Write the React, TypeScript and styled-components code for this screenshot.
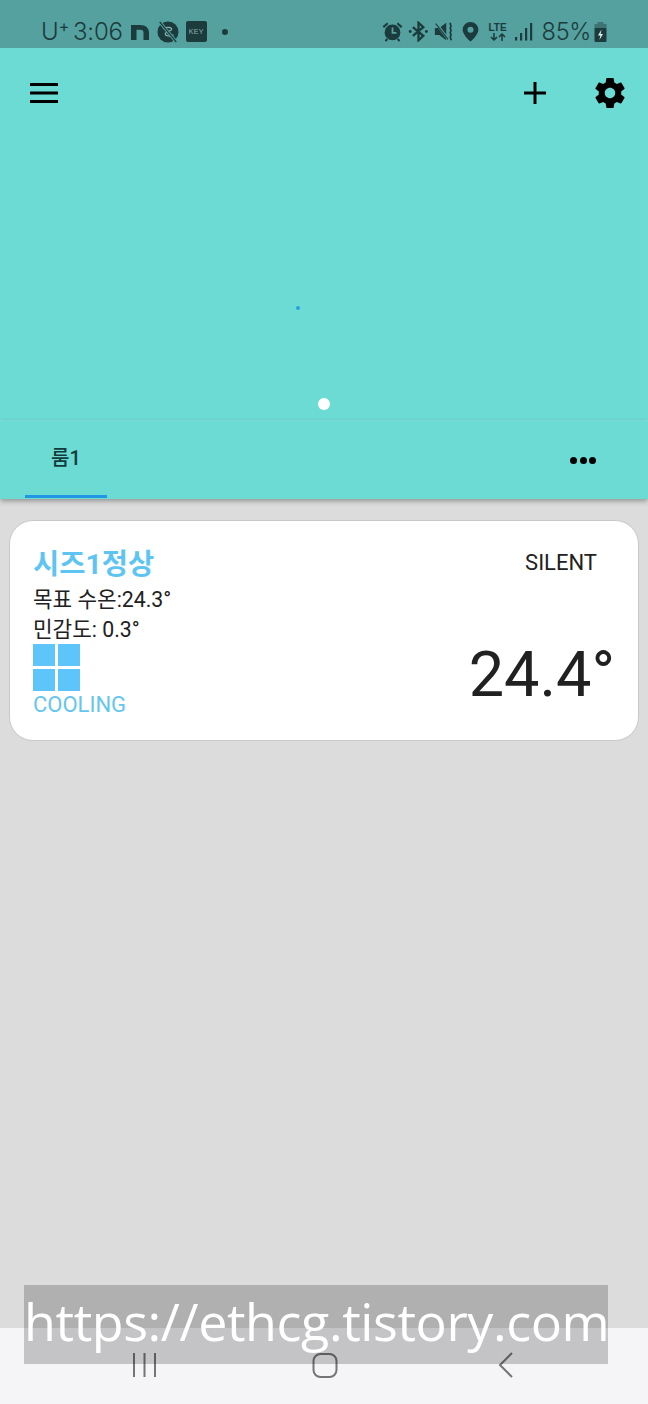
import React from 'react';
import styled, { createGlobalStyle } from 'styled-components';

const GlobalStyle = createGlobalStyle`
html, body {
  margin: 0;
  padding: 0;
  background: #dcdcdc;
}
`;

const StatusIcon: React.FC<{ w: number; children: React.ReactNode }> = ({ w, children }) => (
  <svg width={w} height={w} viewBox="0 0 24 24" fill="#1c3b3c">{children}</svg>
);

const App: React.FC = () => {
  return (
    <Page>
      <GlobalStyle />
      <StatusBar>
        <StatusLeft>
          <Carrier>U<sup>+</sup></Carrier>
          <Clock>3:06</Clock>
          <StatusIcons>
            <NaverN viewBox="0 0 18 16" width="18" height="18">
              <path d="M0 16V1h9.500C14.500 1 18 4 18 8.500V16h-5.500V9c0-2-1-3.200-3-3.200H5.500V16z" fill="#1c3b3c" />
            </NaverN>
            <StatusIcon w={22}>
              <circle cx="12" cy="12" r="11.500" />
              <path d="M7 8.500c3-2.500 9-2 9 .5s-7 2-7 5 6 3 9 1" fill="none" stroke="#8fb3b2" strokeWidth="1.300" />
              <path d="M3 1l18 22" stroke="#55a19f" strokeWidth="3.400" />
              <path d="M3 1l18 22" stroke="#1c3b3c" strokeWidth="1.500" />
            </StatusIcon>
            <KeyBadge>KEY</KeyBadge>
            <Dot />
          </StatusIcons>
        </StatusLeft>
        <StatusRight>
          <StatusIcon w={21}>
            <circle cx="12" cy="13" r="9" />
            <path d="M12 7.500v6h4.500" fill="none" stroke="#55a19f" strokeWidth="2" />
            <path d="M1.500 7l5-4.500M22.500 7l-5-4.500M6 20.500l-2 2.500M18 20.500l2 2.500" stroke="#1c3b3c" strokeWidth="2.400" />
          </StatusIcon>
          <StatusIcon w={21}>
            <path d="M5.500 7l12 10-5.500 5V2l5.500 5-12 10" fill="none" stroke="#1c3b3c" strokeWidth="2.600" />
            <circle cx="2.500" cy="12" r="1.700" />
            <circle cx="21" cy="12" r="1.700" />
          </StatusIcon>
          <StatusIcon w={21}>
            <path d="M1 8h5l8-6v20l-8-6H1z" />
            <path d="M2 2l15 20" stroke="#55a19f" strokeWidth="3" />
            <path d="M2 3l14 18" stroke="#1c3b3c" strokeWidth="1.200" />
            <path d="M19 2c-2 2 2 3 0 5s2 3 0 5 2 3 0 5 2 3 0 5" fill="none" stroke="#1c3b3c" strokeWidth="2" />
          </StatusIcon>
          <StatusIcon w={21}>
            <path d="M12 1a9 9 0 0 0-9 9c0 6 9 13.500 9 13.500S21 16 21 10a9 9 0 0 0-9-9zm0 12.500a3.500 3.500 0 1 1 0-7 3.500 3.500 0 0 1 0 7z" />
          </StatusIcon>
          <LteBlock>
            <LteText>LTE</LteText>
            <svg width="16" height="8" viewBox="0 0 16 8" fill="none" stroke="#1c3b3c" strokeWidth="1.500">
              <path d="M4 0v7M1 4l3 3 3-3M12 8V1M9 4l3-3 3 3" />
            </svg>
          </LteBlock>
          <SignalBars viewBox="0 0 18 18" width="18" height="18" fill="#1c3b3c">
            <rect x="0" y="14" width="2.200" height="3.500" />
            <rect x="5" y="10" width="2.200" height="7.500" />
            <rect x="10" y="5" width="2.200" height="12.500" />
            <rect x="15" y="0" width="2.200" height="17.500" />
          </SignalBars>
          <Battery>85%</Battery>
          <svg width="13" height="20" viewBox="0 0 13 20">
            <rect x="3.500" y="0" width="6" height="3" fill="#3f7474" />
            <rect x="0.500" y="2" width="12" height="5" fill="#3f7474" />
            <rect x="0.500" y="6" width="12" height="14" rx="1" fill="#1c3b3c" />
            <path d="M7.500 7.500L4 13.500h2.400l-1 4.500 3.600-6H6.600z" fill="#dfeeee" />
          </svg>
        </StatusRight>
      </StatusBar>

      <Hero>
        <TopBar>
          <IconButton aria-label="menu">
            <svg width="28" height="20" viewBox="0 0 28 20" fill="#000">
              <rect x="0" y="0" width="28" height="3" />
              <rect x="0" y="8.500" width="28" height="3" />
              <rect x="0" y="17" width="28" height="3" />
            </svg>
          </IconButton>
          <TopActions>
            <IconButton aria-label="add">
              <svg width="24" height="24" viewBox="0 0 24 24" fill="#000">
                <rect x="1" y="10.500" width="22" height="3" />
                <rect x="10.500" y="1" width="3" height="22" />
              </svg>
            </IconButton>
            <IconButton aria-label="settings">
              <svg width="36" height="36" viewBox="0 0 24 24" fill="#000">
                <path d="M19.430 12.980c.04-.32.070-.64.070-.98s-.03-.66-.07-.98l2.110-1.650c.19-.15.240-.42.120-.64l-2-3.460c-.12-.22-.39-.30-.61-.22l-2.490 1c-.52-.40-1.080-.73-1.690-.98l-.38-2.650A.488.488 0 0 0 14 2h-4c-.25 0-.46.180-.49.420l-.38 2.650c-.61.250-1.170.59-1.690.98l-2.490-1c-.23-.09-.49 0-.61.220l-2 3.460c-.13.220-.07.490.12.640l2.110 1.650c-.04.320-.07.650-.07.980s.03.660.07.980l-2.110 1.650c-.19.150-.24.420-.12.640l2 3.460c.12.220.39.300.61.220l2.490-1c.52.400 1.080.730 1.690.980l.38 2.650c.03.240.24.420.49.420h4c.25 0 .46-.180.49-.420l.38-2.650c.61-.250 1.170-.590 1.690-.980l2.490 1c.23.090.49 0 .61-.220l2-3.460c.12-.220.07-.490-.12-.640l-2.110-1.650zM12 15.500c-1.930 0-3.500-1.570-3.500-3.500s1.570-3.500 3.500-3.500 3.500 1.570 3.500 3.500-1.570 3.500-3.500 3.500z" />
              </svg>
            </IconButton>
          </TopActions>
        </TopBar>
        <HeroBody>
          <BlueSpeck />
        </HeroBody>
        <PagerDot />
      </Hero>

      <TabBar>
        <Tab>룸1</Tab>
        <MoreDots>
          <span /><span /><span />
        </MoreDots>
      </TabBar>

      <Content>
        <Card>
          <CardLeft>
            <CardTitle>시즈1정상</CardTitle>
            <CardLine>목표 수온:24.3°</CardLine>
            <CardLine>민감도: 0.3°</CardLine>
            <ModeGrid>
              <span /><span /><span /><span />
            </ModeGrid>
            <ModeLabel>COOLING</ModeLabel>
          </CardLeft>
          <CardRight>
            <FanLabel>SILENT</FanLabel>
            <Temperature>24.4°</Temperature>
          </CardRight>
        </Card>
      </Content>

      <NavBar>
        <svg width="24" height="24" viewBox="0 0 24 24" stroke="#757578" strokeWidth="2">
          <path d="M2 0v24M12.500 0v24M23 0v24" />
        </svg>
        <HomeIcon width="26" height="25" viewBox="0 0 26 25" fill="none" stroke="#757578" strokeWidth="2">
          <rect x="1.500" y="1" width="23" height="23" rx="7" />
        </HomeIcon>
        <svg width="16" height="26" viewBox="0 0 16 26" fill="none" stroke="#757578" strokeWidth="2">
          <path d="M14 1L2 13l12 12" />
        </svg>
      </NavBar>

      <Watermark>https://ethcg.tistory.com</Watermark>
    </Page>
  );
};

const Page = styled.div`
position: relative;
display: flex;
flex-direction: column;
width: 648px;
height: 1404px;
overflow: hidden;
background-color: #dcdcdc;
font-family: Roboto, "Noto Sans CJK KR", sans-serif;
`;

const StatusBar = styled.div`
display: flex;
justify-content: space-between;
align-items: center;
height: 48px;
padding: 15px 41px 0 41px;
box-sizing: border-box;
background-color: #55a19f;
color: #1c3b3c;
`;

const StatusLeft = styled.div`
display: flex;
align-items: center;
`;

const Carrier = styled.span`
width: 32px;
font-family: Inter, Roboto, sans-serif;
font-size: 24px;
font-weight: 300;
line-height: 30px;

sup {
  font-size: 16px;
  line-height: 0;
  font-weight: 400;
  vertical-align: 8px;
}
`;

const Clock = styled.span`
font-family: Inter, Roboto, sans-serif;
font-size: 24px;
font-weight: 300;
line-height: 30px;
letter-spacing: -0.2px;
`;

const StatusIcons = styled.div`
display: flex;
align-items: center;
margin-left: 8px;
gap: 7px;
`;

const NaverN = styled.svg`
display: block;
margin-right: 1px;
`;

const KeyBadge = styled.div`
width: 21px;
height: 21px;
border-radius: 2px;
background-color: #1c3b3c;
color: #8fb3b2;
font-family: "Liberation Sans", sans-serif;
font-size: 7px;
line-height: 21px;
text-align: center;
letter-spacing: 0.3px;
`;

const Dot = styled.div`
width: 6px;
height: 6px;
margin-left: 8px;
border-radius: 50%;
background-color: #1c3b3c;
`;

const StatusRight = styled.div`
display: flex;
align-items: center;
gap: 5px;
`;

const LteBlock = styled.div`
display: flex;
flex-direction: column;
align-items: center;
width: 18px;
margin-left: 3px;
`;

const LteText = styled.span`
font-family: "Liberation Sans", sans-serif;
font-size: 10px;
font-weight: 700;
line-height: 11px;
`;

const SignalBars = styled.svg`
display: block;
margin-left: 3px;
`;

const Battery = styled.span`
margin-left: 4px;
margin-right: -2px;
font-family: Inter, Roboto, sans-serif;
font-size: 23.5px;
font-weight: 300;
line-height: 30px;
letter-spacing: -0.3px;
`;

const Hero = styled.div`
display: flex;
flex-direction: column;
height: 373px;
padding-bottom: 10px;
box-sizing: border-box;
background-color: #6cdbd4;
border-bottom: 1px solid #86e2dc;
`;

const TopBar = styled.div`
display: flex;
justify-content: space-between;
align-items: center;
height: 89px;
padding: 0 20px 0 30px;
`;

const TopActions = styled.div`
display: flex;
align-items: center;
gap: 45px;
`;

const IconButton = styled.div`
display: flex;
align-items: center;
justify-content: center;
`;

const HeroBody = styled.div`
flex: 1;
padding: 169px 0 0 296px;
`;

const BlueSpeck = styled.div`
width: 4px;
height: 4px;
border-radius: 50%;
background-color: #2f9fdc;
`;

const PagerDot = styled.div`
width: 12px;
height: 12px;
margin: 0 auto;
border-radius: 50%;
background-color: #fff;
`;

const TabBar = styled.div`
position: relative;
z-index: 1;
display: flex;
justify-content: space-between;
align-items: stretch;
height: 78px;
padding: 0 52px 0 25px;
background-color: #6cdbd4;
box-shadow: 0 2px 5px rgba(0, 0, 0, 0.35);
`;

const Tab = styled.div`
display: flex;
justify-content: center;
align-items: center;
width: 82px;
height: 77px;
padding-bottom: 4px;
box-sizing: border-box;
border-bottom: 3px solid #2196e3;
color: #123c3c;
font-size: 20px;
font-weight: 500;
`;

const MoreDots = styled.div`
display: flex;
align-items: center;
gap: 2.5px;

span {
  width: 7px;
  height: 7px;
  border-radius: 50%;
  background-color: #000;
}
`;

const Content = styled.div`
flex: 1;
padding: 21px 9px 0;
`;

const Card = styled.div`
display: flex;
justify-content: space-between;
height: 221px;
padding: 24px 23px 0 23px;
box-sizing: border-box;
border: 1px solid #c8c8c8;
border-radius: 24px;
background-color: #fff;
`;

const CardLeft = styled.div`
display: flex;
flex-direction: column;
align-items: flex-start;
`;

const CardTitle = styled.div`
color: #5ec5f2;
font-size: 28.5px;
font-weight: 700;
line-height: 40px;
`;

const CardLine = styled.div`
color: #212121;
font-size: 21.3px;
line-height: 29.5px;
`;

const ModeGrid = styled.div`
display: grid;
grid-template-columns: 22px 22px;
grid-template-rows: 22px 22px;
gap: 3px;

span {
  background-color: #5ec5fb;
}
`;

const ModeLabel = styled.div`
color: #64c6f0;
font-size: 22px;
line-height: 27px;
`;

const CardRight = styled.div`
display: flex;
flex-direction: column;
align-items: flex-end;
`;

const FanLabel = styled.div`
margin: 3px 18px 0 0;
color: #212121;
font-size: 22px;
line-height: 30px;
`;

const Temperature = styled.div`
margin-top: 59px;
color: #212121;
font-size: 63px;
line-height: 76px;
`;

const NavBar = styled.div`
display: flex;
justify-content: space-between;
align-items: center;
height: 76px;
padding: 0 134px 2px 132px;
box-sizing: border-box;
background-color: #f5f5f8;
`;

const HomeIcon = styled.svg`
margin-right: 5px;
`;

const Watermark = styled.div`
position: absolute;
left: 24px;
top: 1285px;
width: 584px;
height: 79px;
background-color: rgba(0, 0, 0, 0.2);
color: #fff;
font-family: "Open Sans", sans-serif;
font-size: 52px;
font-weight: 400;
line-height: 72px;
letter-spacing: -0.4px;
text-align: center;
white-space: nowrap;
`;

export default App;
